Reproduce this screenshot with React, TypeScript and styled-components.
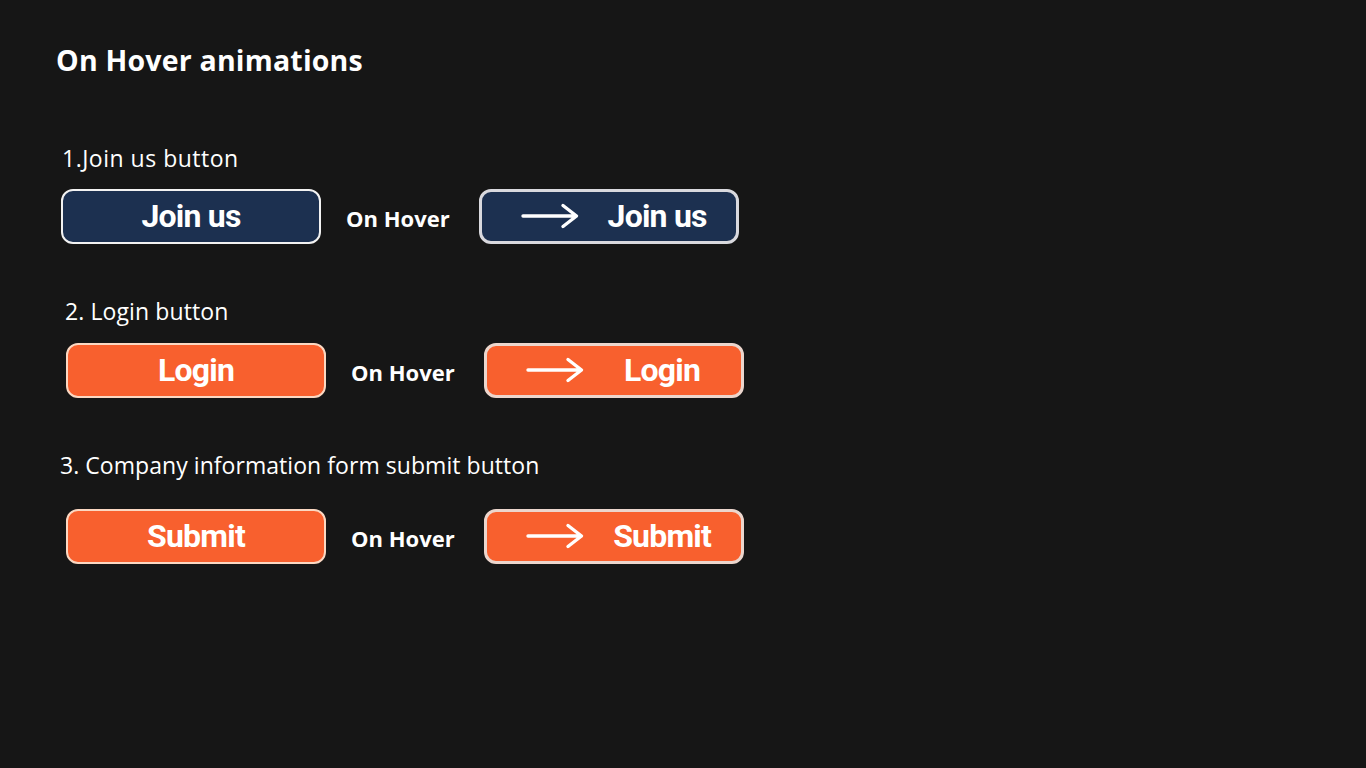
import React from "react";
import styled, { createGlobalStyle } from "styled-components";

const GlobalStyle = createGlobalStyle`
  html, body {
    margin: 0;
    padding: 0;
    background: #161616;
  }
  body {
    font-family: "Open Sans", "Noto Sans", sans-serif;
    color: #ffffff;
  }
`;

const colors = {
  navy: "#1c3050",
  orange: "#f8602e",
  navyBorder: "#f2f2f2",
  orangeBorder: "#fbd8c2",
  hoverBorder: "#d9d9de",
  hoverOrangeBorder: "#ecd6cd",
};

type Variant = "navy" | "orange";

const Page = styled.div`
  width: 1366px;
  height: 768px;
  box-sizing: border-box;
  padding: 42px 0 0 0;
  display: flex;
  flex-direction: column;
`;

const Title = styled.h1`
  margin: 0 0 0 56px;
  font-size: 28.5px;
  line-height: 36px;
  font-weight: 700;
  letter-spacing: 0.2px;
`;

const Section = styled.section<{ $top: number }>`
  display: flex;
  flex-direction: column;
  margin-top: ${(p) => p.$top}px;
`;

const Label = styled.div<{ $indent: number; $gap: number; $spacing: number }>`
  margin-left: ${(p) => p.$indent}px;
  margin-bottom: ${(p) => p.$gap}px;
  font-size: 23px;
  line-height: 30px;
  font-weight: 400;
  letter-spacing: ${(p) => p.$spacing}px;
`;

const Row = styled.div<{ $indent: number }>`
  display: flex;
  align-items: center;
  margin-left: ${(p) => p.$indent}px;
`;

const Button = styled.button<{ $variant: Variant }>`
  width: 260px;
  height: 55px;
  box-sizing: border-box;
  border-radius: 12px;
  border: 2px solid
    ${(p) => (p.$variant === "navy" ? colors.navyBorder : colors.orangeBorder)};
  background: ${(p) => (p.$variant === "navy" ? colors.navy : colors.orange)};
  color: #ffffff;
  font-family: Roboto, "Liberation Sans", sans-serif;
  font-weight: 700;
  font-size: 32px;
  letter-spacing: -0.8px;
  display: flex;
  align-items: center;
  justify-content: center;
  padding: 0 0 1px;
  cursor: pointer;
`;

const HoverButton = styled(Button)`
  border-width: 3.5px;
  border-color: ${(p) =>
    p.$variant === "navy" ? colors.hoverBorder : colors.hoverOrangeBorder};
  justify-content: flex-start;
  padding: 0 0 1px 39px;
`;

const ArrowBox = styled.span`
  display: flex;
  width: 58px;
  height: 26px;
  flex: none;
`;

const HoverText = styled.span`
  flex: 1;
  text-align: center;
`;

const OnHover = styled.span`
  margin: 0 29px 0 25px;
  font-size: 22px;
  font-weight: 700;
  line-height: 28px;
  padding-top: 2px;
`;

function Arrow() {
  return (
    <ArrowBox>
      <svg width="58" height="26" viewBox="0 0 58 26" fill="none">
        <path
          d="M2 13H55M42 2.5L55.5 13L42 23.5"
          stroke="#ffffff"
          strokeWidth="3.4"
          strokeLinecap="round"
          strokeLinejoin="round"
        />
      </svg>
    </ArrowBox>
  );
}

type Demo = {
  label: string;
  text: string;
  variant: Variant;
  labelIndent: number;
  rowIndent: number;
  top: number;
  gap: number;
  spacing: number;
};

const demos: Demo[] = [
  { label: "1.Join us button", text: "Join us", variant: "navy", labelIndent: 62, rowIndent: 61, top: 65, gap: 16, spacing: 0.5 },
  { label: "2. Login button", text: "Login", variant: "orange", labelIndent: 65, rowIndent: 66, top: 52, gap: 17, spacing: 0.1 },
  { label: "3. Company information form submit button", text: "Submit", variant: "orange", labelIndent: 60, rowIndent: 66, top: 52, gap: 29, spacing: 0.05 },
];

export default function App() {
  return (
    <>
      <GlobalStyle />
      <Page>
        <Title>On Hover animations</Title>
        {demos.map((d) => (
          <Section key={d.label} $top={d.top}>
            <Label $indent={d.labelIndent} $gap={d.gap} $spacing={d.spacing}>
              {d.label}
            </Label>
            <Row $indent={d.rowIndent}>
              <Button $variant={d.variant}>{d.text}</Button>
              <OnHover>On Hover</OnHover>
              <HoverButton $variant={d.variant}>
                <Arrow />
                <HoverText>{d.text}</HoverText>
              </HoverButton>
            </Row>
          </Section>
        ))}
      </Page>
    </>
  );
}
